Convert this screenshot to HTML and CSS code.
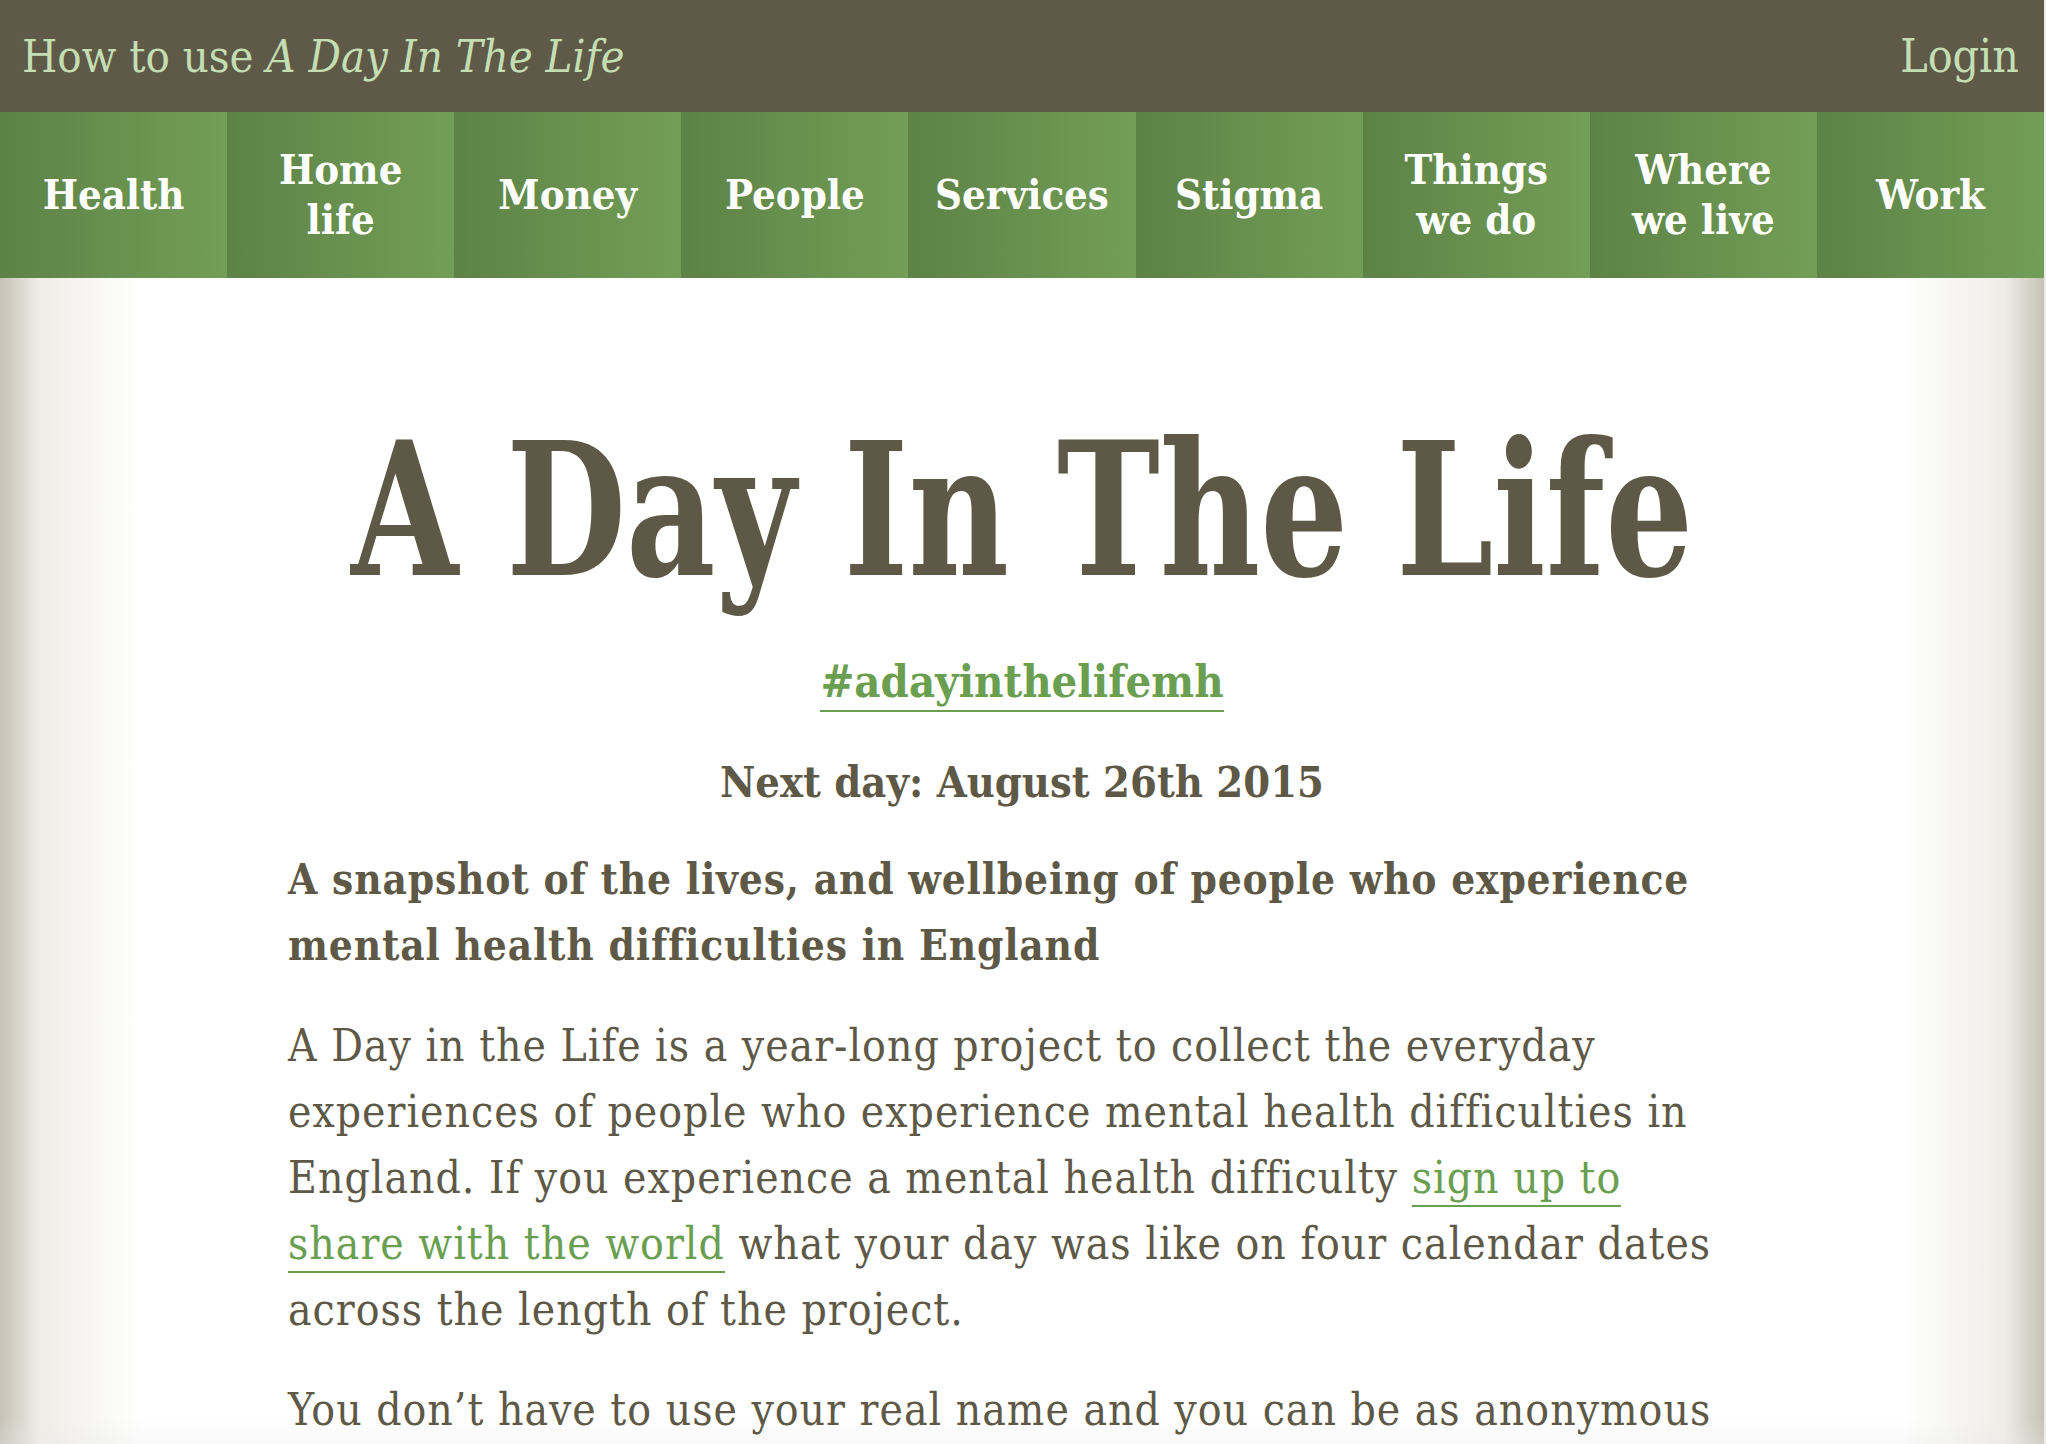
FILE: index.html
```html
<!DOCTYPE html>
<html lang="en">
<head>
<meta charset="utf-8">
<title>A Day In The Life</title>
<link rel="stylesheet" href="styles.css">
</head>
<body>
<div class="page">
  <header class="topbar">
    <a class="howto" href="#">How to use <em>A Day In The Life</em></a>
    <a class="login" href="#">Login</a>
  </header>
  <nav class="topics">
    <a href="#">Health</a>
    <a href="#">Home<br>life</a>
    <a href="#">Money</a>
    <a href="#">People</a>
    <a href="#">Services</a>
    <a href="#">Stigma</a>
    <a href="#">Things<br>we do</a>
    <a href="#">Where<br>we live</a>
    <a href="#">Work</a>
  </nav>
  <main class="content">
    <div class="column">
      <h1 class="title">A Day In The Life</h1>
      <p class="hashtag"><a href="#">#adayinthelifemh</a></p>
      <p class="nextday">Next day: August 26th 2015</p>
      <p class="lead">A snapshot of the lives, and wellbeing of people who experience mental health difficulties in England</p>
      <p class="body">A Day in the Life is a year-long project to collect the everyday experiences of people who experience mental health difficulties in England. If you experience a mental health difficulty <a href="#">sign up to share with the world</a> what your day was like on four calendar dates across the length of the project.</p>
      <p class="body">You don’t have to use your real name and you can be as anonymous as you like.</p>
    </div>
  </main>
</div>
</body>
</html>
```
FILE: styles.css
```css
* { box-sizing: border-box; }
html, body { margin: 0; padding: 0; }
body {
  background: #ececec;
  font-family: "DejaVu Serif Condensed", "DejaVu Serif", serif;
  font-stretch: condensed;
  color: #5e5947;
  overflow: hidden;
}
.page { margin-right: 2px; }
.topbar {
  height: 112px;
  background: #5f5a48;
  display: flex;
  justify-content: space-between;
  align-items: center;
  padding: 0 25px 0 22px;
}
.topbar a {
  color: #c4deb4;
  text-decoration: none;
  font-size: 45px;
}
.topbar .login { font-size: 46px; }
.topbar em { font-style: italic; }
.topics {
  display: grid;
  grid-template-columns: repeat(9, 1fr);
  height: 166px;
}
.topics a {
  display: flex;
  align-items: center;
  justify-content: center;
  text-align: center;
  color: #fff;
  text-decoration: none;
  font-weight: bold;
  font-size: 41.5px;
  line-height: 50px;
  background: linear-gradient(to right, #5d8245, #739e57);
}
.content {
  min-height: 1166px;
  background:
    linear-gradient(to bottom, rgba(235,235,235,0) calc(100% - 90px), rgba(232,232,232,1) 100%),
    linear-gradient(to right, #c6c3b5 0, #eeede8 40px, #fff 140px, #fff calc(100% - 140px), #eeede8 calc(100% - 40px), #c6c3b5 100%);
  padding-top: 1px;
}
.column {
  width: 1468px;
  margin: 0 0 0 288px;
}
.title {
  display: flex;
  justify-content: center;
  margin: 131px 0 0;
  font-size: 185px;
  line-height: 200px;
  font-weight: bold;
  white-space: nowrap;
  transform: scaleX(0.83);
}
.hashtag {
  text-align: center;
  margin: 42px 0 0;
  font-size: 45px;
  line-height: 60px;
  font-weight: bold;
}
.hashtag a, .body a {
  color: #6a9e50;
  text-decoration: none;
  border-bottom: 2px solid #6a9e50;
  padding-bottom: 2px;
}
.nextday {
  text-align: center;
  margin: 40px 0 0;
  font-size: 43px;
  line-height: 60px;
  font-weight: bold;
}
.lead {
  font-size: 42px;
  letter-spacing: 0.8px;
  font-weight: bold;
  line-height: 66px;
  margin: 35px 16px 0 0;
}
.body {
  font-size: 44px;
  letter-spacing: 1px;
  line-height: 66px;
  margin: 34px 16px 0 0;
}
.body + .body { margin-top: 34px; }
```
